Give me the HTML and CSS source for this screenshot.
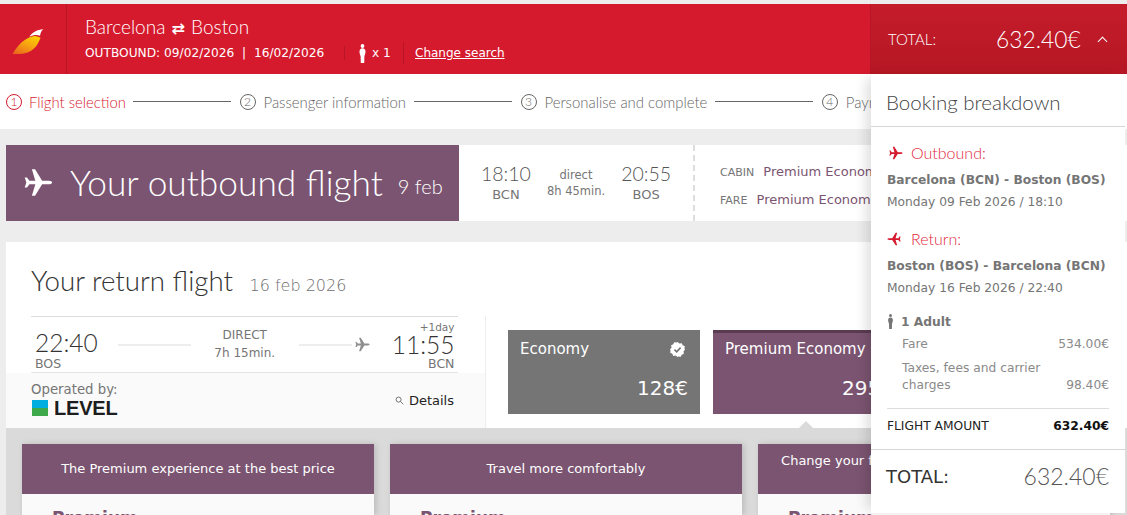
FILE: index.html
```html
<!DOCTYPE html>
<html lang="en">
<head>
    <meta charset="UTF-8">
    <meta name="viewport" content="width=device-width, initial-scale=1.0">
    <title>Your return flight</title>
    <link rel="stylesheet" href="styles.css">
</head>
<body>
    <svg class="sprites" width="0" height="0" aria-hidden="true">
        <symbol id="plane" viewBox="0 0 32 32">
            <path d="M31 16c0-1.2-1.6-2-3.6-2H20L12.200 1.500H8.700L12.500 14H6L3.300 10.500H.8L2.600 16 .8 21.500h2.500L6 18h6.500L8.700 30.500h3.500L20 18h7.400c2 0 3.600-.8 3.600-2z"/>
        </symbol>
        <symbol id="person" viewBox="0 0 10 22">
            <circle cx="5" cy="2.300" r="2.200"/>
            <path d="M5 5C2.800 5 1.500 6.500 1.500 9c0 2.200 1 3.400 1.300 5.200L3 22h4l.2-7.800C7.500 12.400 8.500 11.200 8.500 9 8.500 6.500 7.200 5 5 5z"/>
        </symbol>
    </svg>

    <!-- cabecera roja -->
    <header class="topbar">
        <div class="logo-cell">
            <svg class="logo" viewBox="0 0 34 26" aria-hidden="true">
                <defs>
                    <linearGradient id="swoosh" x1="0.1" y1="1" x2="0.8" y2="0">
                        <stop offset="0" stop-color="#e8641c"/>
                        <stop offset="0.55" stop-color="#f7a312"/>
                        <stop offset="1" stop-color="#fbd000"/>
                    </linearGradient>
                </defs>
                <path fill="url(#swoosh)" d="M.5 26C6 16 14 9 22 7.500c3-.6 5.500 1 7.500 1.500C27 15 24 23 12 25.500 8 26.300 4 26.200.5 26z"/>
                <path fill="#fff" d="M18 8C21 3.500 26 .5 32.500.300 30 2 29.500 4.500 29 7 25.500 5.500 22 6 18 8z"/>
            </svg>
        </div>
        <div class="trip">
            <div class="route">Barcelona <span class="swap">&#8644;</span> Boston</div>
            <div class="trip-meta">
                <span class="dates">OUTBOUND: 09/02/2026 &nbsp;|&nbsp; 16/02/2026</span>
                <span class="pax">
                    <svg class="icon-person"><use href="#person"/></svg>
                    x 1
                </span>
                <a class="change" href="#">Change search</a>
            </div>
        </div>
        <div class="total-cell">
            <span class="total-label">TOTAL:</span>
            <span class="total-price">632.40€</span>
            <span class="chevron"></span>
        </div>
    </header>

    <!-- pasos -->
    <nav class="steps">
        <span class="step active"><i>1</i>Flight selection</span>
        <span class="step-line"></span>
        <span class="step"><i>2</i>Passenger information</span>
        <span class="step-line"></span>
        <span class="step"><i>3</i>Personalise and complete</span>
        <span class="step-line"></span>
        <span class="step"><i>4</i>Payment</span>
    </nav>

    <main class="content">
        <!-- vuelo de ida -->
        <section class="outbound">
            <div class="outbound-title">
                <svg class="icon-plane-big"><use href="#plane"/></svg>
                <span class="outbound-text">Your outbound flight</span>
                <span class="outbound-date">9 feb</span>
            </div>
            <div class="outbound-times">
                <div class="time-col"><b>18:10</b><span>BCN</span></div>
                <div class="direct-col">direct<br>8h 45min.</div>
                <div class="time-col"><b>20:55</b><span>BOS</span></div>
            </div>
            <div class="outbound-fare">
                <div class="fare-line"><small>CABIN</small> Premium Economy</div>
                <div class="fare-line"><small>FARE</small> Premium Economy</div>
            </div>
        </section>

        <!-- vuelo de vuelta -->
        <section class="return">
            <h2 class="return-title">Your return flight <small>16 feb 2026</small></h2>
            <div class="return-body">
                <div class="itinerary">
                    <div class="times">
                        <div class="t-from"><b>22:40</b><span>BOS</span></div>
                        <span class="dash dash-a"></span>
                        <div class="t-mid">DIRECT<br>7h 15min.</div>
                        <span class="dash dash-b"></span>
                        <svg class="icon-plane-grey"><use href="#plane"/></svg>
                        <div class="t-to"><em>+1day</em><b>11:55</b><span>BCN</span></div>
                    </div>
                    <div class="operated">
                        <div>
                            <div class="op-label">Operated by:</div>
                            <div class="level"><span class="level-mark"></span>LEVEL</div>
                        </div>
                        <div class="details">
                            <svg class="icon-search" viewBox="0 0 10 10"><circle cx="4" cy="4" r="2.800"/><path d="M6 6l3.200 3.200"/></svg>
                            Details
                        </div>
                    </div>
                </div>
                <div class="tiles">
                    <div class="tile tile-grey">
                        <div class="tile-name">Economy
                            <svg class="icon-badge" viewBox="0 0 16 16">
                                <path fill="#fff" d="M8 0l2 1.600 2.500-.4 1 2.300 2.300 1-.4 2.500L16 8l-1.600 2 .4 2.500-2.300 1-1 2.300-2.500-.4L8 16l-2-1.600-2.500.4-1-2.300-2.300-1 .4-2.500L0 8l1.600-2-.4-2.500 2.300-1 1-2.300 2.500.4z"/>
                                <path fill="none" stroke="#757575" stroke-width="1.800" d="M4.800 8.200l2.300 2.300 4.200-4.500"/>
                            </svg>
                        </div>
                        <div class="tile-price">128€</div>
                    </div>
                    <div class="tile tile-purple">
                        <div class="tile-name">Premium Economy</div>
                        <div class="tile-price">295€</div>
                    </div>
                </div>
            </div>
            <div class="fare-panel">
                <span class="notch"></span>
                <article class="fare-card">
                    <h3>The Premium experience at the best price</h3>
                    <div class="fare-card-body">Premium</div>
                </article>
                <article class="fare-card">
                    <h3>Travel more comfortably</h3>
                    <div class="fare-card-body">Premium</div>
                </article>
                <article class="fare-card">
                    <h3 class="top">Change your flight with no penalty or extra fee</h3>
                    <div class="fare-card-body">Premium</div>
                </article>
            </div>
        </section>
    </main>

    <!-- desplegable del total -->
    <aside class="breakdown">
        <h2 class="breakdown-title">Booking breakdown</h2>
        <div class="legs">
            <div class="leg">
                <h4><svg class="icon-leg"><use href="#plane"/></svg>Outbound:</h4>
                <strong>Barcelona (BCN) - Boston (BOS)</strong>
                <p>Monday 09 Feb 2026 / 18:10</p>
            </div>
            <div class="leg">
                <h4><svg class="icon-leg back"><use href="#plane"/></svg>Return:</h4>
                <strong>Boston (BOS) - Barcelona (BCN)</strong>
                <p>Monday 16 Feb 2026 / 22:40</p>
            </div>
            <div class="adult"><svg class="icon-adult"><use href="#person"/></svg>1 Adult</div>
            <div class="price-row"><span>Fare</span><span>534.00€</span></div>
            <div class="price-row tall"><span>Taxes, fees and carrier charges</span><span>98.40€</span></div>
            <div class="amount-row"><span>FLIGHT AMOUNT</span><b>632.40€</b></div>
        </div>
        <div class="breakdown-total"><span>TOTAL:</span><span class="breakdown-price">632.40€</span></div>
    </aside>
</body>
</html>
```

FILE: styles.css
```css
:root {
    --red: #d61a2e;
    --purple: #7b5471;
    --grey-bg: #ededed;
    --text-grey: #757575;
    --thin: 'Lato', 'Open Sans', sans-serif;
    --body: 'DejaVu Sans', Verdana, sans-serif;
}

html, body {
    height: 515px;
    overflow: hidden;
}

body {
    margin: 0;
    position: relative;
    padding-top: 4px;
    box-sizing: border-box;
    background: var(--grey-bg);
    font-family: var(--body);
    color: var(--text-grey);
}

.sprites {
    display: none;
}

/* --- cabecera --- */
.topbar {
    display: flex;
    height: 70px;
    background: var(--red);
    color: #fff;
}

.logo-cell {
    width: 67px;
    flex: none;
    box-sizing: border-box;
    border-right: 1px solid #b81526;
    display: flex;
    align-items: center;
    justify-content: center;
    padding: 4px 9px 0 0;
}

.logo {
    width: 33px;
    height: 25px;
}

.trip {
    flex: 1;
    padding: 11px 0 0 18px;
}

.route {
    font-family: var(--thin);
    font-weight: 300;
    font-size: 19px;
    line-height: 24px;
}

.swap {
    font-family: var(--body);
    font-weight: 700;
    font-size: 16px;
    padding: 0 1px;
}

.trip-meta {
    display: flex;
    align-items: center;
    height: 22px;
    margin-top: 1px;
    font-size: 12.200px;
}

.dates {
    width: 259px;
    border-right: 1px solid #b81526;
}

.pax {
    display: flex;
    align-items: center;
    gap: 5px;
    width: 59px;
    padding-left: 13px;
    box-sizing: border-box;
    border-right: 1px solid #b81526;
    height: 22px;
}

.icon-person {
    width: 9px;
    height: 19px;
    fill: #fff;
}

.change {
    color: #fff;
    margin-left: 11px;
    font-size: 12px;
}

.total-cell {
    width: 257px;
    flex: none;
    box-sizing: border-box;
    display: flex;
    align-items: center;
    padding: 0 20px 0 17px;
    background: linear-gradient(#c51c2b, #b61724);
    border-left: 1px solid #b81526;
}

.total-label {
    flex: none;
    font-family: var(--thin);
    font-weight: 300;
    font-size: 15px;
    width: 108px;
}

.total-price {
    flex: none;
    font-family: var(--thin);
    font-weight: 300;
    font-size: 22.800px;
}

.chevron {
    flex: none;
    width: 6px;
    height: 6px;
    margin: 4px 0 0 18px;
    border-top: 1px solid #fff;
    border-left: 1px solid #fff;
    transform: rotate(45deg);
}

/* --- pasos --- */
.steps {
    display: flex;
    align-items: center;
    height: 55px;
    padding-left: 6px;
    background: #fff;
    white-space: nowrap;
    font-family: var(--thin);
    font-weight: 300;
    font-size: 14.900px;
    color: #666;
}

.step {
    display: flex;
    align-items: center;
    gap: 8px;
}

.step i {
    width: 14px;
    height: 14px;
    border: 1px solid #666;
    border-radius: 50%;
    text-align: center;
    font-style: normal;
    font-size: 12px;
    line-height: 14px;
    color: #666;
}

.step.active {
    gap: 7px;
    margin-right: -1px;
    color: var(--red);
}

.step.active i {
    border-color: var(--red);
    color: var(--red);
}

.step-line {
    width: 97.500px;
    height: 1px;
    margin: 0 9px 0 8px;
    background: #666;
}

/* --- vuelo de ida --- */
.content {
    padding: 16px 0 0 6px;
}

.outbound {
    display: flex;
    height: 76px;
    width: 1121px;
    background: #fff;
}

.outbound-title {
    width: 453px;
    flex: none;
    box-sizing: border-box;
    display: flex;
    align-items: center;
    padding: 0 0 2px 18px;
    background: var(--purple);
    color: #fff;
    font-family: var(--thin);
    font-weight: 300;
    white-space: nowrap;
}

.icon-plane-big {
    width: 29px;
    height: 29px;
    fill: #fff;
    margin-right: 17px;
}

.outbound-text {
    font-size: 35.300px;
}

.outbound-date {
    font-size: 20px;
    margin: 8px 0 0 15px;
}

.outbound-times {
    width: 236px;
    flex: none;
    box-sizing: border-box;
    display: flex;
    justify-content: center;
    align-items: center;
    gap: 16px;
    border-right: 2px dashed #ddd;
}

.time-col {
    display: flex;
    flex-direction: column;
    align-items: center;
    font-size: 13px;
    margin-top: -4px;
}

.time-col b {
    font-family: var(--thin);
    font-weight: 300;
    font-size: 19.500px;
    line-height: 27px;
    color: #555;
}

.direct-col {
    text-align: center;
    font-size: 11.500px;
    line-height: 16px;
}

.outbound-fare {
    padding: 13px 0 0 25px;
    white-space: nowrap;
}

.fare-line {
    font-size: 13px;
    line-height: 27px;
    color: var(--purple);
}

.fare-line small {
    font-size: 11px;
    color: var(--text-grey);
    margin-right: 5px;
}

/* --- vuelo de vuelta --- */
.return {
    margin-top: 21px;
    width: 1121px;
    background: #fff;
}

.return-title {
    margin: 0;
    height: 74px;
    box-sizing: border-box;
    padding: 21px 0 0 25px;
    font-family: var(--thin);
    font-weight: 300;
    font-size: 27.700px;
    line-height: 36px;
    color: #333;
}

.return-title small {
    font-family: var(--body);
    font-size: 16px;
    color: #6e6e6e;
    margin-left: 9px;
}

.return-body {
    display: flex;
    height: 112px;
}

.itinerary {
    width: 480px;
    flex: none;
    box-sizing: border-box;
    display: flex;
    flex-direction: column;
    border-right: 1px solid #eee;
}

.times {
    height: 57px;
    margin-left: 25px;
    margin-right: 27px;
    box-sizing: border-box;
    border-top: 1px solid #ddd;
    border-bottom: 1px solid #e5e5e5;
    display: flex;
    align-items: center;
    padding: 0 0 0 4px;
}

.t-from, .t-to {
    flex: none;
    align-self: flex-start;
    display: flex;
    flex-direction: column;
    font-size: 12.500px;
    line-height: 12px;
}

.t-from {
    margin-top: 13px;
}

.t-from b, .t-to b {
    font-family: var(--thin);
    font-weight: 300;
    font-size: 24.500px;
    line-height: 25px;
    color: #333;
}

.t-from span {
    margin-top: 3px;
}

.t-to {
    align-items: flex-end;
    margin-left: 22px;
    margin-top: 5px;
}

.t-to span {
    margin-top: 1px;
}

.t-to em {
    font-style: normal;
    font-size: 10.500px;
    line-height: 10px;
}

.dash {
    flex: none;
    height: 2px;
    background: #eee;
}

.dash-a {
    width: 73px;
    margin-left: 20px;
}

.dash-b {
    width: 53px;
}

.t-mid {
    flex: none;
    width: 108px;
    text-align: center;
    font-size: 12px;
    line-height: 18px;
    margin-top: -2px;
}

.icon-plane-grey {
    flex: none;
    width: 15px;
    height: 15px;
    fill: #8f8f8f;
    margin: -1px 0 0 3px;
}

.operated {
    flex: 1;
    display: flex;
    justify-content: space-between;
    align-items: center;
    padding: 0 31px 4px 26px;
    background: #fafafa;
}

.op-label {
    font-size: 13.300px;
    line-height: 16px;
    margin: 2px 0 0 -1px;
}

.level {
    display: flex;
    align-items: center;
    gap: 6px;
    font-family: 'Liberation Sans', sans-serif;
    font-weight: 700;
    font-size: 20px;
    line-height: 20px;
    letter-spacing: -0.2px;
    color: #1d1d1d;
}

.level-mark {
    width: 16px;
    height: 16px;
    background: linear-gradient(#00aee0 50%, #3ea94b 50%);
}

.details {
    display: flex;
    align-items: center;
    gap: 5px;
    font-size: 13px;
    color: #222;
    padding-top: 4px;
}

.icon-search {
    width: 9px;
    height: 9px;
    fill: none;
    stroke: #666;
    stroke-width: 1;
}

.tiles {
    display: flex;
    gap: 13px;
    padding: 14px 0 0 22px;
}

.tile {
    width: 192px;
    height: 84px;
    box-sizing: border-box;
    display: flex;
    flex-direction: column;
    justify-content: space-between;
    padding: 10px 12px 14px;
    color: #fff;
    font-size: 15px;
}

.tile-grey {
    background: var(--text-grey);
}

.tile-purple {
    background: var(--purple);
    border-top: 3px solid #5a3b52;
    padding-top: 7px;
}

.tile-name {
    display: flex;
    justify-content: space-between;
    align-items: center;
    line-height: 18px;
}

.icon-badge {
    width: 15px;
    height: 15px;
    margin-right: 3px;
}

.tile-price {
    text-align: right;
    font-size: 20px;
    line-height: 24px;
}

.fare-panel {
    position: relative;
    display: flex;
    align-items: flex-start;
    gap: 16px;
    padding: 16px 16px 0;
    height: 87px;
    box-sizing: border-box;
    background: #dadada;
}

.notch {
    position: absolute;
    top: -7px;
    left: 793px;
    border: 7px solid transparent;
    border-top-width: 0;
    border-bottom-color: #dadada;
}

.fare-card {
    width: 352px;
    height: 71px;
    flex: none;
    overflow: hidden;
    background: #fafafa;
    box-shadow: 2px 0 6px rgba(0,0,0,0.15);
}

.fare-card h3 {
    margin: 0;
    height: 50px;
    background: var(--purple);
    color: #fff;
    font-size: 13px;
    font-weight: 400;
    line-height: 50px;
    text-align: center;
    white-space: nowrap;
}

.fare-card h3.top {
    line-height: 34px;
}

.fare-card-body {
    padding: 14px 30px 0;
    font-size: 17px;
    line-height: 20px;
    font-weight: 700;
    color: var(--purple);
}

/* --- desplegable --- */
.breakdown {
    position: absolute;
    top: 74px;
    left: 871px;
    width: 254px;
    height: 439px;
    background: #fff;
    box-shadow: -8px 0 12px -4px rgba(0,0,0,0.14);
    font-size: 12.250px;
}

.breakdown-title {
    margin: 0;
    height: 53px;
    box-sizing: border-box;
    padding: 14px 0 0 15px;
    border-bottom: 1px solid #d5d5d5;
    font-family: var(--thin);
    font-weight: 300;
    font-size: 20.500px;
    line-height: 28px;
    color: #444;
}

.legs {
    padding: 16px 16px 0;
    height: 322px;
    box-sizing: border-box;
}

.leg {
    height: 86px;
    line-height: 22px;
}

.leg h4 {
    display: flex;
    align-items: center;
    gap: 8px;
    height: 22px;
    box-sizing: border-box;
    padding-bottom: 2px;
    margin: 0 0 4px;
    font-family: var(--thin);
    font-weight: 300;
    font-size: 16px;
    color: #e3273c;
}

.leg strong {
    display: block;
    white-space: nowrap;
}

.leg p {
    margin: 0;
}

.icon-leg {
    width: 14px;
    height: 14px;
    fill: #d61a2e;
    margin-left: 2px;
}

.icon-leg.back {
    transform: rotate(180deg);
    margin-left: 0;
    margin-right: 2px;
}

.adult {
    display: flex;
    align-items: center;
    gap: 7px;
    font-weight: 700;
    height: 23px;
    margin-top: -5px;
}

.icon-adult {
    width: 7px;
    height: 15px;
    fill: var(--text-grey);
}

.price-row {
    display: flex;
    justify-content: space-between;
    align-items: flex-end;
    padding-left: 15px;
    margin-top: 3px;
    line-height: 17px;
    color: #8a8a8a;
}

.price-row.tall {
    margin-top: 7px;
}

.price-row.tall span:first-child {
    width: 150px;
}

.amount-row {
    display: flex;
    justify-content: space-between;
    margin-top: 14px;
    padding-top: 9px;
    border-top: 1px solid #ddd;
    color: #222;
    line-height: 16px;
}

.amount-row b {
    color: #111;
}

.breakdown-total {
    display: flex;
    justify-content: space-between;
    align-items: center;
    padding: 0 16px 2px 15px;
    height: 52px;
    border-top: 1px solid #d5d5d5;
    font-size: 18px;
    color: #333;
}

.breakdown-price {
    font-family: var(--thin);
    font-weight: 300;
    font-size: 23px;
    color: #555;
}
```
